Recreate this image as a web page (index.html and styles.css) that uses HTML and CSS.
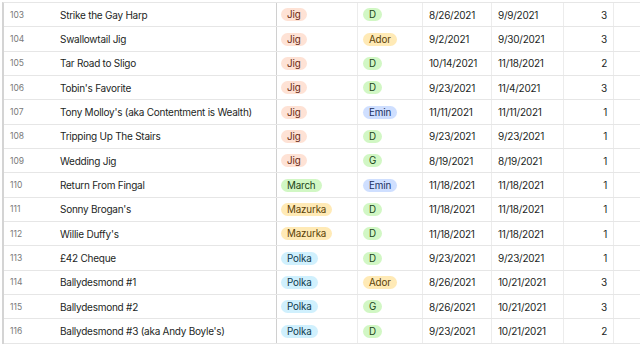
FILE: index.html
```html
<!DOCTYPE html>
<html>
<head>
<meta charset="utf-8">
<link rel="stylesheet" href="styles.css">
</head>
<body>
<div class="grid">
  <div class="row"><div class="frozen"><span class="num">103</span><span class="name">Strike the Gay Harp</span></div><div class="cell type"><span class="pill jig">Jig</span></div><div class="cell key"><span class="pill green">D</span></div><div class="cell date">8/26/2021</div><div class="cell date2">9/9/2021</div><div class="cell count">3</div><div class="cell extra"></div></div>
  <div class="row"><div class="frozen"><span class="num">104</span><span class="name">Swallowtail Jig</span></div><div class="cell type"><span class="pill jig">Jig</span></div><div class="cell key"><span class="pill yellow">Ador</span></div><div class="cell date">9/2/2021</div><div class="cell date2">9/30/2021</div><div class="cell count">3</div><div class="cell extra"></div></div>
  <div class="row"><div class="frozen"><span class="num">105</span><span class="name">Tar Road to Sligo</span></div><div class="cell type"><span class="pill jig">Jig</span></div><div class="cell key"><span class="pill green">D</span></div><div class="cell date">10/14/2021</div><div class="cell date2">11/18/2021</div><div class="cell count">2</div><div class="cell extra"></div></div>
  <div class="row"><div class="frozen"><span class="num">106</span><span class="name">Tobin's Favorite</span></div><div class="cell type"><span class="pill jig">Jig</span></div><div class="cell key"><span class="pill green">D</span></div><div class="cell date">9/23/2021</div><div class="cell date2">11/4/2021</div><div class="cell count">3</div><div class="cell extra"></div></div>
  <div class="row"><div class="frozen"><span class="num">107</span><span class="name">Tony Molloy's (aka Contentment is Wealth)</span></div><div class="cell type"><span class="pill jig">Jig</span></div><div class="cell key"><span class="pill blue">Emin</span></div><div class="cell date">11/11/2021</div><div class="cell date2">11/11/2021</div><div class="cell count">1</div><div class="cell extra"></div></div>
  <div class="row"><div class="frozen"><span class="num">108</span><span class="name">Tripping Up The Stairs</span></div><div class="cell type"><span class="pill jig">Jig</span></div><div class="cell key"><span class="pill green">D</span></div><div class="cell date">9/23/2021</div><div class="cell date2">9/23/2021</div><div class="cell count">1</div><div class="cell extra"></div></div>
  <div class="row"><div class="frozen"><span class="num">109</span><span class="name">Wedding Jig</span></div><div class="cell type"><span class="pill jig">Jig</span></div><div class="cell key"><span class="pill green">G</span></div><div class="cell date">8/19/2021</div><div class="cell date2">8/19/2021</div><div class="cell count">1</div><div class="cell extra"></div></div>
  <div class="row"><div class="frozen"><span class="num">110</span><span class="name">Return From Fingal</span></div><div class="cell type"><span class="pill green">March</span></div><div class="cell key"><span class="pill blue">Emin</span></div><div class="cell date">11/18/2021</div><div class="cell date2">11/18/2021</div><div class="cell count">1</div><div class="cell extra"></div></div>
  <div class="row"><div class="frozen"><span class="num">111</span><span class="name">Sonny Brogan's</span></div><div class="cell type"><span class="pill yellow">Mazurka</span></div><div class="cell key"><span class="pill green">D</span></div><div class="cell date">11/18/2021</div><div class="cell date2">11/18/2021</div><div class="cell count">1</div><div class="cell extra"></div></div>
  <div class="row"><div class="frozen"><span class="num">112</span><span class="name">Willie Duffy's</span></div><div class="cell type"><span class="pill yellow">Mazurka</span></div><div class="cell key"><span class="pill green">D</span></div><div class="cell date">11/18/2021</div><div class="cell date2">11/18/2021</div><div class="cell count">1</div><div class="cell extra"></div></div>
  <div class="row"><div class="frozen"><span class="num">113</span><span class="name">£42 Cheque</span></div><div class="cell type"><span class="pill cyan">Polka</span></div><div class="cell key"><span class="pill green">D</span></div><div class="cell date">9/23/2021</div><div class="cell date2">9/23/2021</div><div class="cell count">1</div><div class="cell extra"></div></div>
  <div class="row"><div class="frozen"><span class="num">114</span><span class="name">Ballydesmond #1</span></div><div class="cell type"><span class="pill cyan">Polka</span></div><div class="cell key"><span class="pill yellow">Ador</span></div><div class="cell date">8/26/2021</div><div class="cell date2">10/21/2021</div><div class="cell count">3</div><div class="cell extra"></div></div>
  <div class="row"><div class="frozen"><span class="num">115</span><span class="name">Ballydesmond #2</span></div><div class="cell type"><span class="pill cyan">Polka</span></div><div class="cell key"><span class="pill green">G</span></div><div class="cell date">8/26/2021</div><div class="cell date2">10/21/2021</div><div class="cell count">3</div><div class="cell extra"></div></div>
  <div class="row"><div class="frozen"><span class="num">116</span><span class="name">Ballydesmond #3 (aka Andy Boyle's)</span></div><div class="cell type"><span class="pill cyan">Polka</span></div><div class="cell key"><span class="pill green">D</span></div><div class="cell date">9/23/2021</div><div class="cell date2">10/21/2021</div><div class="cell count">2</div><div class="cell extra"></div></div>
</div>
</body>
</html>
```
FILE: styles.css
```css
* { box-sizing: border-box; }
html, body { margin: 0; padding: 0; background: #fff; }
body {
  font-family: Inter, "Liberation Sans", sans-serif;
  font-size: 10px;
  letter-spacing: -0.25px;
  color: #1d1f25;
  overflow: hidden;
  height: 346px;
}
.grid {
  margin-left: 2px;
  margin-top: 2px;
  border-left: 2px solid #d4d4d4;
  border-top: 1px solid #e6e6e6;
}
.row {
  display: grid;
  grid-template-columns: 273px 81px 65px 69px 72px 50px 1fr;
  height: 24.35px;
  border-bottom: 1px solid #e6e6e6;
}
.frozen {
  display: flex;
  align-items: center;
  border-right: 1px solid #d0d0d0;
  white-space: nowrap;
  overflow: hidden;
}
.num {
  width: 56px;
  padding-left: 6px;
  font-size: 8.5px;
  letter-spacing: 0;
  color: #7a7a7a;
  flex: none;
}
.name { color: #1d1f25; }
.cell {
  display: flex;
  align-items: center;
  border-right: 1px solid #ececec;
  white-space: nowrap;
  overflow: hidden;
}
.cell.extra { border-right: none; }
.type { padding-left: 4px; }
.key { padding-left: 5px; }
.date { padding-left: 6px; }
.date2 { padding-left: 6px; }
.count { justify-content: flex-end; padding-right: 6px; }
.pill {
  display: inline-flex;
  align-items: center;
  height: 13px;
  padding: 0 6px;
  border-radius: 7px;
  font-size: 9.8px;
  letter-spacing: -0.15px;
  line-height: 13px;
}
.jig { background: #fee2d5; color: #6a2a14; }
.green { background: #d1f7c4; color: #1c4418; }
.yellow { background: #ffeab6; color: #5a4208; }
.blue { background: #cfdfff; color: #1a2f5e; }
.cyan { background: #d0f0fd; color: #0e3a4c; }
```
